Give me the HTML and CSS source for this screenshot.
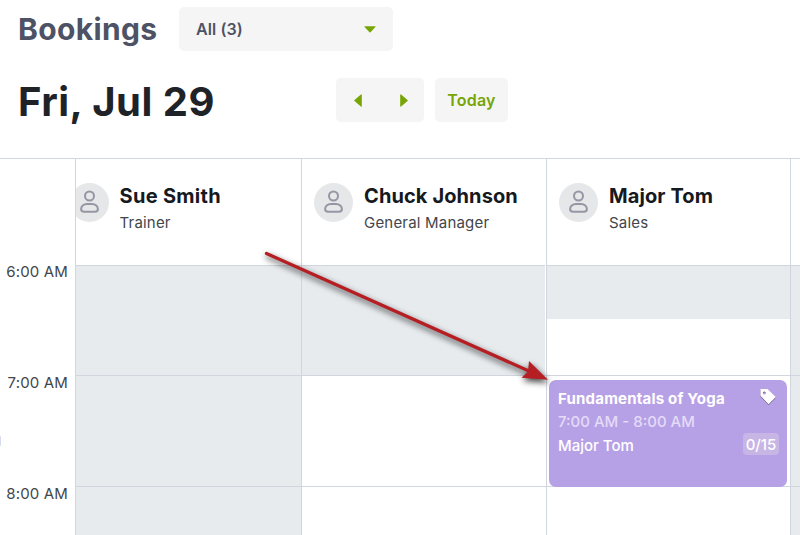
FILE: index.html
```
<!DOCTYPE html>
<html>
	<head>
		<meta charset="utf-8" />
		<title>Bookings</title>
		<meta name="viewport" content="width=device-width, initial-scale=1.0" />
		<link rel="stylesheet" href="styles.css">
	</head>
	<body>
		<svg class="defs" width="0" height="0">
			<symbol id="user" viewBox="0 0 39 39">
				<circle cx="19.5" cy="19.5" r="19.5" fill="#e6e7e9" />
				<g fill="none" stroke="#9496a4" stroke-width="2">
					<circle cx="19.5" cy="13" r="4.5" />
					<path d="M17 21h5c3.500 0 5.900 2.400 5.900 5 0 1.800-1.200 2.800-3 2.800H14.100c-1.800 0-3-1-3-2.800 0-2.600 2.400-5 5.900-5z" />
				</g>
			</symbol>
		</svg>
		<div class="top">
			<h1 class="title">Bookings</h1>
			<div class="select">
				<span class="select-text">All (3)</span>
				<svg width="12" height="7" viewBox="0 0 12 7"><path d="M.8.2h10.400q.8.200.2.900L6.500 6.300q-.5.500-1 0L.6 1.100Q0 .4.800.2z" fill="#77a506" /></svg>
			</div>
		</div>
		<div class="toolbar">
			<h2 class="date">Fri, Jul 29</h2>
			<div class="arrows">
				<svg width="8" height="13" viewBox="0 0 8 13"><path d="M7.800.8v11.400q-.2.800-.9.200L.5 7q-.6-.5 0-1L6.900.6q.7-.6.9.2z" fill="#77a506" /></svg>
				<svg width="8" height="13" viewBox="0 0 8 13"><path d="M.2.800v11.400q.2.800.9.200L7.500 7q.6-.5 0-1L1.100.6Q.400 0 .2.800z" fill="#77a506" /></svg>
			</div>
			<div class="today">Today</div>
		</div>
		<div class="calendar">
			<div class="times">
				<div class="time">6:00 AM</div>
				<div class="time">7:00 AM</div>
				<div class="time">8:00 AM</div>
				<div class="handle"></div>
			</div>
			<div class="col col-first">
				<div class="person">
					<svg class="avatar"><use href="#user" /></svg>
					<div>
						<div class="name name-sue">Sue Smith</div>
						<div class="role">Trainer</div>
					</div>
				</div>
				<div class="hour six off"></div>
				<div class="hour seven off"></div>
				<div class="hour eight off"></div>
			</div>
			<div class="col col-mid">
				<div class="person">
					<svg class="avatar"><use href="#user" /></svg>
					<div>
						<div class="name">Chuck Johnson</div>
						<div class="role">General Manager</div>
					</div>
				</div>
				<div class="hour six off gap"></div>
				<div class="hour seven"></div>
				<div class="hour eight"></div>
			</div>
			<div class="col col-last">
				<div class="person">
					<svg class="avatar"><use href="#user" /></svg>
					<div>
						<div class="name">Major Tom</div>
						<div class="role">Sales</div>
					</div>
				</div>
				<div class="hour six half"></div>
				<div class="hour seven">
					<div class="event">
						<div class="event-row">
							<span class="event-title">Fundamentals of Yoga</span>
							<svg class="tag" width="18" height="18" viewBox="0 0 18 18"><path d="M1.500 1h7l8.200 8-7.100 7.200-8.100-8.500zM5.300 3.400a1.500 1.500 0 1 0 0 3 1.500 1.500 0 0 0 0-3z" fill="#fff" fill-rule="evenodd" /></svg>
						</div>
						<div class="event-time">7:00 AM - 8:00 AM</div>
						<div class="event-row">
							<span class="event-host">Major Tom</span>
							<span class="count">0/15</span>
						</div>
					</div>
				</div>
				<div class="hour eight"></div>
			</div>
			<div class="col col-rest">
				<div class="person"></div>
				<div class="hour six off"></div>
				<div class="hour seven off"></div>
				<div class="hour eight off"></div>
			</div>
		</div>
		<!-- pointer to the class -->
		<svg class="pointer" width="800" height="535" viewBox="0 0 800 535">
			<path d="M266.500 253.500L530 371.500" stroke="#b51f24" stroke-width="3.300" stroke-linecap="round" />
			<path d="M548 379.800L521.500 377.700l6.500-6.200 1-10.500z" fill="#b51f24" />
		</svg>
	</body>
</html>
```
FILE: styles.css
```
html,body
{
	height: 100%;
	margin: 0;
	padding: 0;
}

body
{
	background-color: #fff;
	color: #1f2328;
	display: flex;
	flex-direction: column;
	font-family: Inter,"Liberation Sans",sans-serif;
	overflow: hidden;
	position: relative;
}

.defs
{
	position: absolute;
}

.top
{
	align-items: center;
	display: flex;
	height: 44px;
	padding: 7px 0 0 18px;
}

.title,.date
{
	margin: 0;
	white-space: nowrap;
}

.title
{
	color: #4d5264;
	font-size: 30px;
	font-weight: 700;
	letter-spacing: 0.35px;
	line-height: 44px;
	width: 161px;
}

.select
{
	align-items: center;
	background-color: #f5f5f5;
	border-radius: 5px;
	box-sizing: border-box;
	color: #4d5264;
	display: flex;
	height: 44px;
	justify-content: space-between;
	padding: 0 17px 0 17px;
	width: 214px;
}

.select-text
{
	font-size: 16px;
	font-weight: 600;
	letter-spacing: 0.1px;
}

.toolbar
{
	align-items: center;
	display: flex;
	height: 44px;
	padding: 27px 0 36px 18px;
}

.date
{
	font-size: 40px;
	font-weight: 700;
	letter-spacing: 0.5px;
	line-height: 42px;
	padding-top: 4px;
	width: 318px;
}

.arrows
{
	align-items: center;
	background-color: #f5f5f5;
	border-radius: 5px;
	box-sizing: border-box;
	display: flex;
	height: 44px;
	justify-content: space-between;
	margin-right: 11px;
	padding: 0 16px 0 18px;
	width: 88px;
}

.today
{
	background-color: #f5f5f5;
	border-radius: 5px;
	color: #77a506;
	font-size: 16px;
	font-weight: 600;
	height: 44px;
	letter-spacing: 0.2px;
	line-height: 44px;
	text-align: center;
	width: 73px;
}

.calendar
{
	border-top: 1px solid #d1d5de;
	display: flex;
	height: 376px;
	overflow: hidden;
}

.times
{
	box-sizing: border-box;
	color: #42464b;
	font-size: 15px;
	height: 376px;
	letter-spacing: 0.15px;
	overflow: hidden;
	padding: 103px 7px 0 0;
	position: relative;
	text-align: right;
	width: 75px;
}

.time
{
	height: 111px;
	line-height: 20px;
	white-space: nowrap;
}

.time:nth-child(3)
{
	height: 20px;
}

.handle
{
	background-color: #d5dbea;
	border-radius: 0 5px 5px 0;
	height: 10px;
	left: 0;
	position: absolute;
	top: 277px;
	width: 1px;
}

.col
{
	border-left: 1px solid #d1d5de;
	box-sizing: border-box;
	height: 376px;
	overflow: hidden;
}

.col-first
{
	width: 226px;
}

.col-mid
{
	width: 245px;
}

.col-last
{
	width: 244px;
}

.col-rest
{
	width: 10px;
}

.person
{
	box-sizing: border-box;
	display: flex;
	height: 106px;
	padding: 24px 0 0 12px;
	white-space: nowrap;
}

.col-first .person
{
	margin-left: -18px;
}

.avatar
{
	flex: none;
	height: 39px;
	margin-right: 11px;
	width: 39px;
}

.name
{
	color: #16191d;
	font-size: 20px;
	font-weight: 700;
	letter-spacing: 0.1px;
	line-height: 26px;
}

.name-sue
{
	letter-spacing: 0.3px;
}

.role
{
	color: #42464b;
	font-size: 15px;
	letter-spacing: 0.2px;
	line-height: 27px;
}

.col-first .name,.col-first .role
{
	margin-left: -0.5px;
}

.hour
{
	border-top: 1px solid #d1d5de;
	box-sizing: border-box;
}

.six
{
	height: 110px;
}

.seven
{
	height: 111px;
}

.eight
{
	height: 49px;
}

.off
{
	background-color: #e7ebee;
}

.gap
{
	margin-right: 1px;
}

.half
{
	background: linear-gradient(#e7ebee 53px,#fff 53px);
}

.event
{
	background-color: #b7a1e6;
	border-radius: 7px;
	box-sizing: border-box;
	color: #fff;
	font-size: 15px;
	height: 107px;
	line-height: 23px;
	margin: 4px 3px 0 2px;
	padding: 7px 8px 0 9px;
	position: relative;
	white-space: nowrap;
}

.event-row
{
	display: flex;
	justify-content: space-between;
	height: 23px;
}

.event-title
{
	font-weight: 700;
	letter-spacing: 0.2px;
	line-height: 24px;
}

.event-time
{
	color: #e4dbf8;
	font-weight: 500;
	height: 23px;
	line-height: 24px;
}

.event-host
{
	font-weight: 500;
	line-height: 25px;
}

.tag
{
	filter: drop-shadow(0 1px 0 #75688f);
	margin: 1px 2px 0 0;
}

.count
{
	background-color: #c6b5e5;
	border-radius: 4px;
	font-weight: 500;
	height: 22px;
	line-height: 24px;
	text-align: center;
	width: 36px;
}

.pointer
{
	filter: drop-shadow(1px 3px 3px rgba(0,0,0,.75));
	left: 0;
	position: absolute;
	top: 0;
}
```
